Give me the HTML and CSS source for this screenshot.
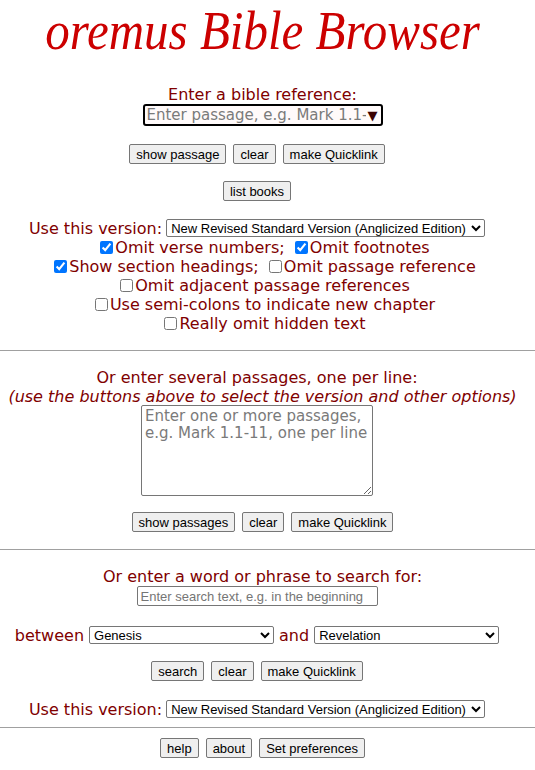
FILE: index.html
```html
<!DOCTYPE html>
<html lang="en">
<head>
    <meta charset="UTF-8">
    <title>oremus Bible Browser</title>
    <link rel="stylesheet" href="styles.css">
</head>
<body>
    <h1 class="title"><span>oremus Bible Browser</span></h1>

    <form class="block first">
        <div class="label">Enter a bible reference:</div>
        <div class="row">
            <div class="combo">
                <input type="text" class="ref" placeholder="Enter passage, e.g. Mark 1.1-11">
                <span class="arrow">&#9660;</span>
            </div>
        </div>
        <div class="row buttons nudge">
            <button type="button">show passage</button>
            <button type="button">clear</button>
            <button type="button">make Quicklink</button>
        </div>
        <div class="row buttons gap17 nudge">
            <button type="button">list books</button>
        </div>
        <div class="row version nudge">
            <span>Use this version:</span>
            <select class="vsel">
                <option>New Revised Standard Version (Anglicized Edition)</option>
            </select>
        </div>
        <div class="opts">
            <div><label><input type="checkbox" checked>Omit verse numbers;</label>&nbsp; <label><input type="checkbox" checked>Omit footnotes</label></div>
            <div><label><input type="checkbox" checked>Show section headings;</label>&nbsp; <label><input type="checkbox">Omit passage reference</label></div>
            <div><label><input type="checkbox">Omit adjacent passage references</label></div>
            <div><label><input type="checkbox">Use semi-colons to indicate new chapter</label></div>
            <div><label><input type="checkbox">Really omit hidden text</label></div>
        </div>
    </form>

    <hr class="rule1">

    <form class="block">
        <div class="label nudge">Or enter several passages, one per line:</div>
        <div class="label note">(use the buttons above to select the version and other options)</div>
        <div class="row nudge">
            <textarea class="many" placeholder="Enter one or more passages, e.g. Mark 1.1-11, one per line"></textarea>
        </div>
        <div class="row buttons gap16">
            <button type="button">show passages</button>
            <button type="button">clear</button>
            <button type="button">make Quicklink</button>
        </div>
    </form>

    <hr>

    <form class="block">
        <div class="label">Or enter a word or phrase to search for:</div>
        <div class="row nudge">
            <input type="text" class="search" placeholder="Enter search text, e.g. in the beginning">
        </div>
        <div class="row between nudge">
            <span>between</span>
            <select class="book"><option>Genesis</option></select>
            <span>and</span>
            <select class="book"><option>Revelation</option></select>
        </div>
        <div class="row buttons gap16 nudge">
            <button type="button">search</button>
            <button type="button">clear</button>
            <button type="button">make Quicklink</button>
        </div>
        <div class="row version v2 nudge">
            <span>Use this version:</span>
            <select class="vsel">
                <option>New Revised Standard Version (Anglicized Edition)</option>
            </select>
        </div>
    </form>

    <hr class="rule3">

    <div class="row buttons foot">
        <button type="button">help</button>
        <button type="button">about</button>
        <button type="button">Set preferences</button>
    </div>
</body>
</html>
```

FILE: styles.css
```css
body {
    margin: 0;
    padding-right: 10px;
    font-family: "DejaVu Sans", Verdana, sans-serif;
    font-size: 16px;
    color: #800000;
    text-align: center;
    background: white;
}
.title {
    display: flex;
    justify-content: center;
    align-items: center;
    height: 61px;
    font-family: "Liberation Serif", serif;
    font-weight: normal;
    font-style: italic;
    font-size: 49px;
    line-height: 56px;
    color: #cc0000;
    margin: 0 0 24px;
    white-space: nowrap;
}
.title span {
    display: block;
    padding: 0 4px;
    transform: scaleY(1.12);
}
.block {
    margin: 0;
}
.row {
    display: flex;
    justify-content: center;
    align-items: center;
}
.nudge {
    padding-right: 11px;
}
.label {
    line-height: 19px;
}
.note {
    font-style: italic;
}
.combo {
    box-sizing: border-box;
    display: flex;
    align-items: center;
    width: 240px;
    height: 22px;
    border: 2px solid #000;
    border-radius: 3px;
    background: #fffafa;
}
.ref {
    flex: 1;
    min-width: 0;
    border: none;
    outline: none;
    background: transparent;
    font-family: inherit;
    font-size: 15px;
    padding: 0 1px 0 2px;
    color: #000;
}
.ref::placeholder, .many::placeholder {
    color: #7a7a7a;
}
.arrow {
    font-size: 13px;
    color: #3a0000;
    padding: 0 3px 0 1px;
}
.buttons {
    gap: 7px;
    margin-top: 18px;
}
.gap17 {
    margin-top: 17px;
}
.gap16 {
    margin-top: 16px;
}
button {
    font-family: "Liberation Sans", Arial, sans-serif;
    font-size: 13px;
    color: #000;
    background: #efefef;
    border: 1px solid #767676;
    border-radius: 2px;
    padding: 1px 6px;
    height: 20px;
}
.version {
    margin-top: 17px;
    height: 20px;
    gap: 4px;
}
.v2 {
    margin-top: 18px;
}
.vsel, .book {
    font-family: "Liberation Sans", Arial, sans-serif;
    font-size: 13px;
    color: #000;
    background: #fff;
    border: 1px solid #767676;
    border-radius: 2px;
    height: 18px;
    padding: 0;
}
.vsel {
    width: 319px;
}
.opts {
    line-height: 19px;
    padding-left: 5px;
}
.opts input {
    margin: 0 2px 0 0;
    width: 13px;
    height: 13px;
    vertical-align: -1px;
}
hr {
    border: none;
    border-top: 1px solid #a0a0a0;
    margin: 17px -10px 0 0;
}
.rule1 {
    margin-top: 17px;
}
.rule3 {
    margin-top: 8px;
}
hr + .block {
    padding-top: 17px;
}
.many {
    box-sizing: border-box;
    width: 232px;
    height: 91px;
    font-family: inherit;
    font-size: 15px;
    line-height: 17px;
    border: 1px solid #767676;
    border-radius: 2px;
    padding: 2px 3px;
    margin: -1px 0 0;
    resize: both;
}
.search {
    box-sizing: border-box;
    font-family: "Liberation Sans", Arial, sans-serif;
    font-size: 13px;
    width: 241px;
    height: 20px;
    border: 1px solid #767676;
    border-radius: 2px;
    padding: 1px 3px;
    margin: 0;
}
.search::placeholder {
    color: #757575;
}
.between {
    margin-top: 19px;
    height: 20px;
    gap: 5px;
}
.book {
    width: 185px;
}
.foot {
    margin-top: 10px;
}
```
